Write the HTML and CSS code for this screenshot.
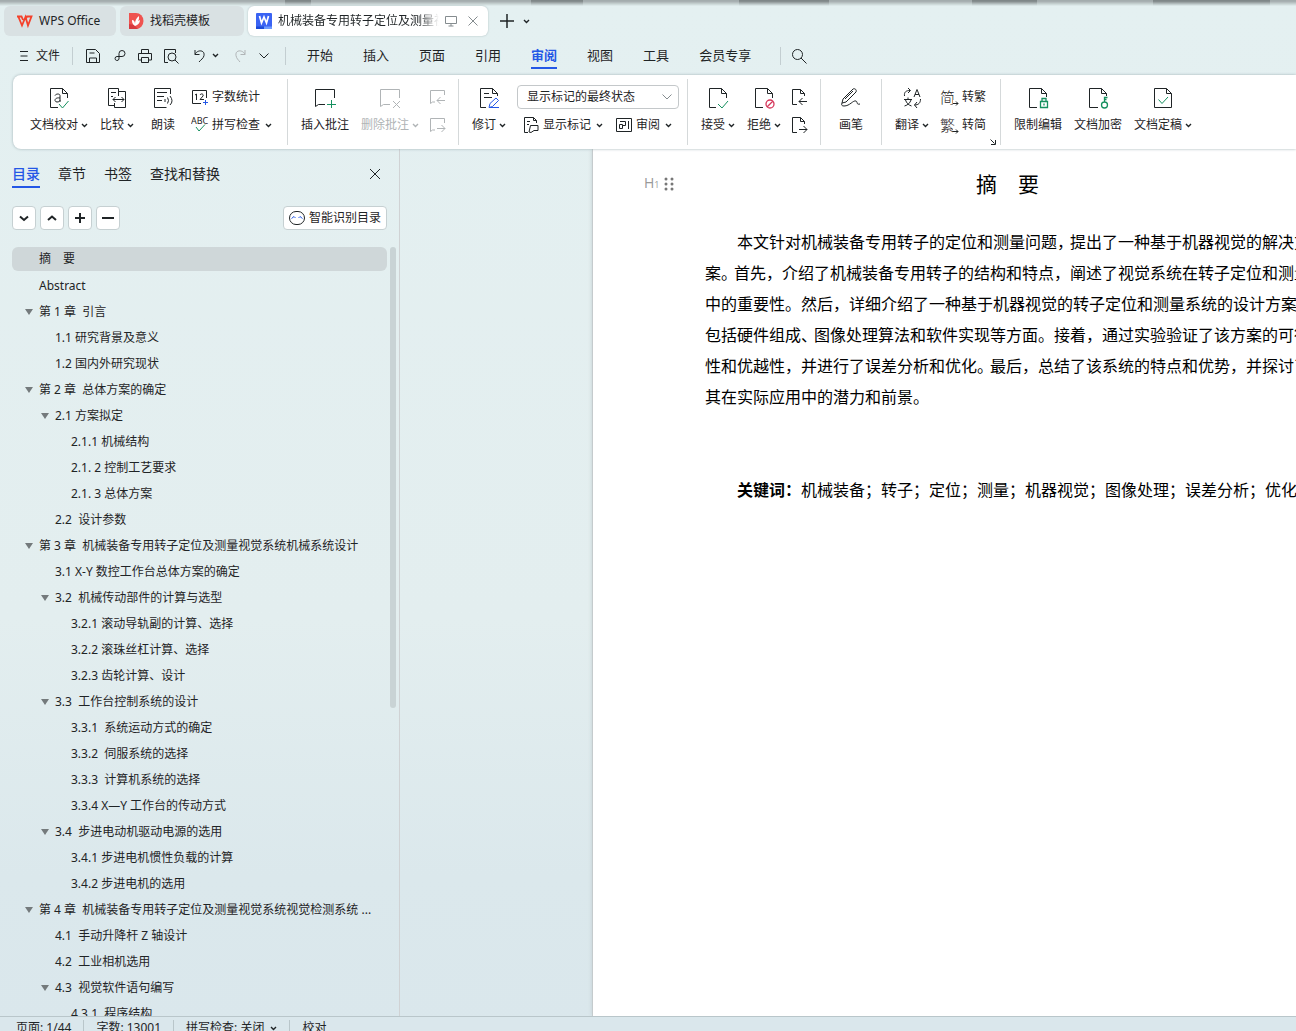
FILE: index.html
```html
<!DOCTYPE html>
<html lang="zh-CN">
<head>
<meta charset="utf-8">
<title>WPS Office</title>
<link rel="stylesheet" href="styles.css">
</head>
<body>
<svg class="defs" aria-hidden="true">
  <symbol id="caret" viewBox="0 0 7 5"><path d="M1 1l2.500 2.500L6 1" stroke-width="1.400"/></symbol>
</svg>
<header class="tabs">
  <button class="tab tab-home" type="button">
    <svg class="i16 logo" viewBox="0 0 16 16"><path d="M0 3.500h4.500L6 7M1.500 4L5 12.500 8.500 4 11 12.500 14.500 3.500H10L8.500 7" stroke-width="1.800"/></svg>
    <span>WPS Office</span>
  </button>
  <button class="tab tab-docer" type="button">
    <svg class="i16" viewBox="0 0 16 16"><path d="M1 0h7a7.500 8 0 0 1 0 16H1z" fill="#ef5350"/><path d="M1 11l5 1 4 4H1z" fill="#d63a3f"/><path d="M7 13c-3-2-3-4-3-6 2 0 3 2 3 4 0-3 1-6 4-8 0 2 0 4-1 5l2-1c0 3-2 5-5 6z" fill="#fff"/></svg>
    <span>找稻壳模板</span>
  </button>
  <button class="tab tab-active" type="button">
    <svg class="i16" viewBox="0 0 16 16"><rect width="16" height="16" rx="1" fill="#3a63f3"/><path d="M0 13.500h8V16H0z" fill="#1a4ad8"/><path d="M8 13.500h8V16H8z" fill="#6d9bff"/><path class="white" d="M3.500 3l2 7L8 4l2.500 6 2-7" stroke-width="1.700"/></svg>
    <span class="tab-title">机械装备专用转子定位及测量视</span>
    <svg class="i12 grey" viewBox="0 0 12 12"><path d="M.5 1.500h11v7H.5zM6 8.500v2.500M3.500 11h5"/></svg>
    <svg class="i12 grey tab-x" viewBox="0 0 12 12"><path d="M1.500 1.500l9 9M10.500 1.500l-9 9"/></svg>
  </button>
  <button class="plain new-tab" type="button" aria-label="新建"><svg class="i16" viewBox="0 0 16 16"><path d="M8 1v14M1 8h14" stroke-width="1.500"/></svg></button>
  <button class="plain" type="button" aria-label="更多"><svg class="caret"><use href="#caret"/></svg></button>
</header>
<nav class="menu">
  <button class="plain file" type="button"><svg class="i12" viewBox="0 0 12 12"><path d="M2 1.500h8M2.500 6h7M2 10.500h8"/></svg>文件</button>
  <span class="bar"></span>
  <div class="quick">
    <button class="plain" type="button" aria-label="保存"><svg class="i16" viewBox="0 0 16 16"><path d="M1.500 1.500h9l4 4v9h-13zM4.500 14v-4h7v4M4.500 5h5"/></svg></button>
    <button class="plain" type="button" aria-label="输出"><svg class="i16" viewBox="0 0 16 16"><path d="M7 8.500h4a3 3 0 1 0-3-3V11a2 2 0 1 1-2-2.500h1"/></svg></button>
    <button class="plain" type="button" aria-label="打印"><svg class="i16" viewBox="0 0 16 16"><path d="M4.500 5V1.500h7V5M4 12H1.500V5.500h13V12H12M4.500 9.500h7v5h-7z"/></svg></button>
    <button class="plain" type="button" aria-label="打印预览"><svg class="i16" viewBox="0 0 16 16"><path d="M5 14.500H1.500v-13h11V5"/><circle cx="9" cy="9" r="4"/><path d="M12 12l3.500 3.500"/></svg></button>
    <button class="plain undo" type="button" aria-label="撤销"><svg class="i16" viewBox="0 0 16 16"><path d="M3 2v4.500h4.500M3 6.500c2-5 10-5 9 1-.5 3-3 4-5 6.500"/></svg><svg class="caret"><use href="#caret"/></svg></button>
    <button class="plain" type="button" aria-label="恢复" disabled><svg class="i16" viewBox="0 0 16 16"><path d="M13 2v4.500H8.500M13 6.500c-2-5-10-5-9 1 .5 3 2 4 4 6.500"/></svg></button>
    <button class="plain" type="button" aria-label="自定义"><svg class="i12" viewBox="0 0 12 12"><path d="M1.500 3.500L6 8l4.500-4.500"/></svg></button>
  </div>
  <span class="bar"></span>
  <div class="menus">
    <a href="#">开始</a><a href="#">插入</a><a href="#">页面</a><a href="#">引用</a><a href="#" class="on">审阅</a><a href="#">视图</a><a href="#">工具</a><a href="#">会员专享</a>
  </div>
  <span class="bar"></span>
  <button class="plain search" type="button" aria-label="搜索"><svg class="i16" viewBox="0 0 16 16"><circle cx="6.500" cy="6.500" r="5"/><path d="M10 10l5.500 5.500"/></svg></button>
</nav>
<section class="ribbon">
  <div class="group g1">
    <button class="big w70" type="button"><svg class="i24" viewBox="0 0 24 24"><path d="M11 21.500H3.500v-19h12l5 5V12M15.500 2.500v5h5"/><path d="M8 9.500c1-2 5-2 5 0V16M13 12c-6-1-6 4-3 4 2 0 3-1 3-2"/><path class="green" d="M12 18l3.500 4 6-7"/></svg><span>文档校对<svg class="caret"><use href="#caret"/></svg></span></button>
    <button class="big w46" type="button"><svg class="i24" viewBox="0 0 24 24"><path d="M9 19.500H3.500v-17h10V10M6 6.500h5M6 10.500h2M14 5.500h6.500v16h-11V17M8 13.500h11M10.500 11L8 13.500l2.500 2.500M16.500 11l2.500 2.500-2.500 2.500"/></svg><span>比较<svg class="caret"><use href="#caret"/></svg></span></button>
    <button class="big w46" type="button"><svg class="i24" viewBox="0 0 24 24"><path d="M19.500 8V2.500h-16v19h12M6 6.500h10M6 10.500h7M6 14.500h5M14 13v3M16.500 11.500q2 3 0 6M19 10q4 5 0 9"/></svg><span>朗读</span></button>
    <div class="stack">
      <button class="row" type="button"><svg class="i18" viewBox="0 0 18 18"><path d="M10 15.500H1.500v-13h14V10"/><path d="M4 7l1.500-1v6M9 7c1-2 4-1 3 1l-3 3.500h4"/><path class="blue" d="M14.500 12v5M12 14.500h5"/></svg>字数统计</button>
      <button class="row" type="button"><svg class="i18" viewBox="0 0 18 18"><text x="0" y="8" class="abc">ABC</text><path class="green" d="M5 11l3 4 6-6.500"/></svg>拼写检查<svg class="caret"><use href="#caret"/></svg></button>
    </div>
  </div>
  <div class="group g2">
    <button class="big w60" type="button"><svg class="i24" viewBox="0 0 24 24"><path d="M21.500 12V3.500h-19v17l3-2H12"/><path class="green" d="M18.500 14v8M14 18.500h9"/></svg><span>插入批注</span></button>
    <button class="big w70" type="button" disabled><svg class="i24" viewBox="0 0 24 24"><path d="M21.500 12V3.500h-19v17l3-2H12M15 15l7 7M22 15l-7 7"/></svg><span>删除批注<svg class="caret"><use href="#caret"/></svg></span></button>
    <div class="stack narrow">
      <button class="row" type="button" aria-label="上一条" disabled><svg class="i18" viewBox="0 0 18 18"><path d="M16.500 7V2.500h-14v13l2-1.500H7M9 12.500h8M12.500 9L9 12.500l3.500 3.500"/></svg></button>
      <button class="row" type="button" aria-label="下一条" disabled><svg class="i18" viewBox="0 0 18 18"><path d="M16.500 7V2.500h-14v13l2-1.500H7M9 12.500h8M13.500 9l3.500 3.500-3.500 3.500"/></svg></button>
    </div>
  </div>
  <div class="group g3">
    <button class="big w46" type="button"><svg class="i24" viewBox="0 0 24 24"><path d="M9 21.500H3.500v-19h12l5 5V10M15.500 2.500v5h5M7 7.500h5M7 11.500h8"/><path class="blue" d="M12 21.500l1-4 6-5.500 2.500 2.500-6 6-3.500 1h10"/></svg><span>修订<svg class="caret"><use href="#caret"/></svg></span></button>
    <div class="stack">
      <div class="state">
        <select aria-label="显示标记"><option>显示标记的最终状态</option></select>
        <svg class="i12 grey" viewBox="0 0 12 12"><path d="M1.500 3.500L6 8l4.500-4.500"/></svg>
      </div>
      <div class="pair">
        <button class="row" type="button"><svg class="i18" viewBox="0 0 18 18"><path d="M6 16.500H2.500v-15h9L14.500 4.500V7M11.500 1.500v3h3M5 5.500h3M5 8.500h2M8.500 9.500H16v5h-4l-3 2-2-.5z"/></svg>显示标记<svg class="caret"><use href="#caret"/></svg></button>
        <button class="row" type="button"><svg class="i18" viewBox="0 0 18 18"><path d="M1.500 2.500h15v13h-15zM13.500 5v8M5 5.500h5.500v4H8M4.500 8.500h3v4h-3z"/></svg>审阅<svg class="caret"><use href="#caret"/></svg></button>
      </div>
    </div>
  </div>
  <div class="group g4">
    <button class="big w46" type="button"><svg class="i24" viewBox="0 0 24 24"><path d="M10 21.500H3.500v-19h12l5 5V12M15.500 2.500v5h5"/><path class="green" d="M12 18l4 4 6-7"/></svg><span>接受<svg class="caret"><use href="#caret"/></svg></span></button>
    <button class="big w46" type="button"><svg class="i24" viewBox="0 0 24 24"><path d="M11 21.500H3.500v-19h12l5 5V12M15.500 2.500v5h5"/><path class="red" d="M15 21l6-6M22 18a4 4 0 1 1-8 0 4 4 0 0 1 8 0z" stroke-width="1.300"/></svg><span>拒绝<svg class="caret"><use href="#caret"/></svg></span></button>
    <div class="stack narrow">
      <button class="row" type="button" aria-label="上一处修订"><svg class="i18" viewBox="0 0 18 18"><path d="M7 16.500H2.500v-15h8l4 4V8M10.500 1.500v4h4M9 13.500h8M12.500 10L9 13.500l3.500 3.500"/></svg></button>
      <button class="row" type="button" aria-label="下一处修订"><svg class="i18" viewBox="0 0 18 18"><path d="M7 16.500H2.500v-15h8l4 4V8M10.500 1.500v4h4M9 13.500h8M13.500 10l3.500 3.500-3.500 3.500"/></svg></button>
    </div>
  </div>
  <div class="group g5">
    <button class="big w60" type="button"><svg class="i24" viewBox="0 0 24 24"><path d="M3 17l1-4L14 3c2-1 4 1 3 3L7 16zM6 13l8-8M3 17c-1 2 0 3 2 3 6 0 9-6 12-5 2 1 0 4 4 3"/></svg><span>画笔</span></button>
  </div>
  <div class="group g6">
    <button class="big w46" type="button"><svg class="i24" viewBox="0 0 24 24"><path d="M4.500 10C4 6 6 4.500 10 4.500M8 2l2.500 2.500L8 7M14 11l3-7.500 3 7.500M15 8.500h4M4 13.500h8M8 11.500v2M5.500 14c1 3 3 5 6 6M11 14c-1 3-3 5-6.500 6M20.500 13c0 4-2 6-6 6M17 16l-2.500 3 2.500 3"/></svg><span>翻译<svg class="caret"><use href="#caret"/></svg></span></button>
    <div class="stack">
      <button class="row" type="button"><span class="glyph">简<svg viewBox="0 0 6 6"><path d="M0 3.500h5M3 1.500l2 2-2 2"/></svg></span>转繁</button>
      <button class="row" type="button"><span class="glyph">繁<svg viewBox="0 0 6 6"><path d="M0 3.500h5M3 1.500l2 2-2 2"/></svg></span>转简</button>
    </div>
    <svg class="launcher" viewBox="0 0 6 6"><path d="M.5 .5l4 4M5.500 1v4.500H1"/></svg>
  </div>
  <div class="group g7">
    <button class="big w60" type="button"><svg class="i24" viewBox="0 0 24 24"><path d="M11 21.500H3.500v-19h12l5 5V11M15.500 2.500v5h5"/><path class="green" d="M14.500 15.500h7v6h-7zM16 15v-2.500h4V15M18 17.500v2" stroke-width="1.300"/></svg><span>限制编辑</span></button>
    <button class="big w60" type="button"><svg class="i24" viewBox="0 0 24 24"><path d="M12 21.500H3.500v-19h12l5 5V10M15.500 2.500v5h5"/><path class="green" d="M18.500 16v-4.500h3M18.500 13.500h2M21.500 19a3 3 0 1 1-6 0 3 3 0 0 1 6 0z" stroke-width="1.300"/></svg><span>文档加密</span></button>
    <button class="big w70" type="button"><svg class="i24" viewBox="0 0 24 24"><path d="M15.500 2.500h-12v19h17v-14zM15.500 2.500v5h5"/><path class="green" d="M7.500 13.500l3.500 4 6-6.500"/></svg><span>文档定稿<svg class="caret"><use href="#caret"/></svg></span></button>
  </div>
</section>
<main class="work">
  <aside class="side">
    <div class="side-tabs">
      <button class="on" type="button">目录</button><button type="button">章节</button><button type="button">书签</button><button type="button">查找和替换</button>
      <button class="close" type="button" aria-label="关闭"><svg class="i12" viewBox="0 0 12 12"><path d="M1 1l10 10M11 1L1 11"/></svg></button>
    </div>
    <div class="tools">
      <button type="button" aria-label="展开"><svg class="i12" viewBox="0 0 12 12"><path d="M2 4.500l4 3.500 4-3.500" stroke-width="2"/></svg></button>
      <button type="button" aria-label="收起"><svg class="i12" viewBox="0 0 12 12"><path d="M2 8l4-3.500L10 8" stroke-width="2"/></svg></button>
      <button type="button" aria-label="增加"><svg class="i12" viewBox="0 0 12 12"><path d="M1 6h10M6 1v10" stroke-width="2"/></svg></button>
      <button type="button" aria-label="减少"><svg class="i12" viewBox="0 0 12 12"><path d="M0 6h12" stroke-width="2"/></svg></button>
      <button class="smart" type="button"><svg class="i16" viewBox="0 0 16 16"><rect x=".5" y="1.500" width="15" height="13" rx="6.500"/><path class="blue" d="M2.500 8.500l2.500-2 1.500 1.500M9.500 8L11 6.500l2.500 2"/></svg>智能识别目录</button>
    </div>
    <div class="toc-wrap">
      <ul class="toc">
        <li class="sel">摘　要</li>
        <li>Abstract</li>
        <li class="open">第 1 章&nbsp; 引言</li>
        <li class="l2">1.1 研究背景及意义</li>
        <li class="l2">1.2 国内外研究现状</li>
        <li class="open">第 2 章&nbsp; 总体方案的确定</li>
        <li class="l2 open">2.1 方案拟定</li>
        <li class="l3">2.1.1 机械结构</li>
        <li class="l3">2.1. 2 控制工艺要求</li>
        <li class="l3">2.1. 3 总体方案</li>
        <li class="l2">2.2&nbsp; 设计参数</li>
        <li class="open">第 3 章&nbsp; 机械装备专用转子定位及测量视觉系统机械系统设计</li>
        <li class="l2">3.1 X-Y 数控工作台总体方案的确定</li>
        <li class="l2 open">3.2&nbsp; 机械传动部件的计算与选型</li>
        <li class="l3">3.2.1 滚动导轨副的计算、选择</li>
        <li class="l3">3.2.2 滚珠丝杠计算、选择</li>
        <li class="l3">3.2.3 齿轮计算、设计</li>
        <li class="l2 open">3.3&nbsp; 工作台控制系统的设计</li>
        <li class="l3">3.3.1&nbsp; 系统运动方式的确定</li>
        <li class="l3">3.3.2&nbsp; 伺服系统的选择</li>
        <li class="l3">3.3.3&nbsp; 计算机系统的选择</li>
        <li class="l3">3.3.4 X—Y 工作台的传动方式</li>
        <li class="l2 open">3.4&nbsp; 步进电动机驱动电源的选用</li>
        <li class="l3">3.4.1 步进电机惯性负载的计算</li>
        <li class="l3">3.4.2 步进电机的选用</li>
        <li class="open">第 4 章&nbsp; 机械装备专用转子定位及测量视觉系统视觉检测系统 ...</li>
        <li class="l2">4.1&nbsp; 手动升降杆 Z 轴设计</li>
        <li class="l2">4.2&nbsp; 工业相机选用</li>
        <li class="l2 open">4.3&nbsp; 视觉软件语句编写</li>
        <li class="l3">4.3.1&nbsp; 程序结构</li>
      </ul>
      <div class="scroll"><div class="thumb"></div></div>
    </div>
  </aside>
  <div class="canvas">
    <article class="paper">
      <div class="heading">
        <span class="h-mark">H<small>1</small></span>
        <svg class="grip" viewBox="0 0 10 14"><circle cx="2" cy="2" r="1.500"/><circle cx="8" cy="2" r="1.500"/><circle cx="2" cy="7" r="1.500"/><circle cx="8" cy="7" r="1.500"/><circle cx="2" cy="12" r="1.500"/><circle cx="8" cy="12" r="1.500"/></svg>
        <h1>摘　要</h1>
      </div>
      <p>本文针对机械装备专用转子的定位和测量问题<span class="tight">，</span>提出了一种基于机器视觉的解决方<br>案<span class="tight">。</span>首先，介绍了机械装备专用转子的结构和特点，阐述了视觉系统在转子定位和测量<br>中的重要性。然后，详细介绍了一种基于机器视觉的转子定位和测量系统的设计方案，<br>包括硬件组成<span class="tight">、</span>图像处理算法和软件实现等方面。接着，通过实验验证了该方案的可行<br>性和优越性，并进行了误差分析和优化<span class="tight">。</span>最后，总结了该系统的特点和优势，并探讨了<br>其在实际应用中的潜力和前景。</p>
      <p class="keys"><b>关键词：</b>机械装备；转子；定位；测量；机器视觉；图像处理；误差分析；优化</p>
    </article>
  </div>
</main>
<footer class="status">
  <span>页面: 1/44</span><span>字数: 13001</span><span>拼写检查: 关闭<svg class="caret"><use href="#caret"/></svg></span><span>校对</span>
</footer>
</body>
</html>
```
FILE: styles.css
```css
* { box-sizing: border-box; }
body {
  margin: 0;
  height: 100vh;
  overflow: hidden;
  display: flex;
  flex-direction: column;
  font: 12px/16px "Noto Sans", "Noto Sans CJK SC", sans-serif;
  color: #1f2426;
  background: linear-gradient(#e4f0f1, #e3eeef 60%, #dbe8ec 85%, #dae7ec);
}
button, select { font: inherit; color: inherit; }
button { border: 0; background: none; padding: 0; display: flex; align-items: center; white-space: nowrap; }
button:disabled { color: #b0b4b6; }
svg { fill: none; stroke: currentColor; flex: none; }
ul { list-style: none; margin: 0; padding: 0; }
.defs { display: none; }
.i12 { width: 12px; height: 12px; }
.i16 { width: 16px; height: 16px; }
.i18 { width: 18px; height: 18px; }
.i24 { width: 24px; height: 24px; }
.caret { width: 7px; height: 5px; }
.grey { color: #858c8f; }
.green { stroke: #16905f; }
.blue { stroke: #2457e6; }
.red { stroke: #d5365a; }
.white { stroke: #fff; }
.logo { color: #f4412b; }

.tabs {
  flex: none;
  position: relative;
  height: 37px;
  padding: 6px 4px 1px;
  display: flex;
  gap: 4px;
}
.tabs::before {
  content: "";
  position: absolute;
  inset: 0 0 auto;
  height: 6px;
  background: linear-gradient(90deg, #a3acad 22%, #7f8788 22%, #7f8788 24%, #a3acad 24%, #a3acad 41%, #7f8788 41%, #7f8788 45%, #a3acad 45%, #a3acad 57%, #7f8788 57%, #7f8788 64%, #a3acad 64%, #a3acad 75%, #7f8788 75%, #7f8788 80%, #a3acad 80%, #a3acad 89%, #7f8788 89%, #7f8788 98%, #a3acad 98%);
  mask-image: linear-gradient(#000 20%, transparent);
}
.tab { height: 30px; border-radius: 6px; background: #d9e1e3; padding: 0 8px; gap: 6px; }
.tab-docer > svg, .tab-active > svg:first-child { stroke: none; }
.tab-home { width: 112px; padding-left: 13px; }
.tab-docer { width: 124px; }
.tab-active { width: 240px; background: #fff; box-shadow: 0 0 2px #a9b9bc; }
.tab-title { width: 161px; overflow: hidden; mask-image: linear-gradient(90deg, #000 88%, transparent); }
.tab-x { margin-left: 4px; }
.new-tab { margin: 0 4px 0 7px; }

.menu { flex: none; height: 37px; display: flex; align-items: center; padding-left: 18px; }
.file { gap: 6px; }
.bar { width: 1px; height: 18px; background: #c3ced1; margin: 0 12px; }
.quick { display: flex; gap: 10px; width: 188px; }
.undo { gap: 4px; margin: 0 3px; }
.menus { display: flex; gap: 30px; margin: 0 17px 0 9px; font-size: 13px; }
.menus a { color: inherit; text-decoration: none; line-height: 24px; border-bottom: 2px solid transparent; }
.menus .on { color: #2457e6; font-weight: bold; border-color: #2457e6; }
.search { margin-left: -2px; }

.ribbon {
  flex: none;
  position: relative;
  z-index: 2;
  margin: 1px 0 0 13px;
  height: 74px;
  display: flex;
  background: #fff;
  border-radius: 8px 0 0 8px;
  box-shadow: 0 0 3px #9fb0b4;
}
.group { display: flex; align-items: flex-start; padding: 10px 0 0; margin: 4px 0; border-right: 1px solid #d5d9da; height: 66px; position: relative; }
.group .big { margin-top: -3px; }
.g1 { width: 275px; padding-left: 11px; }
.g2 { width: 171px; padding-left: 7px; }
.g3 { width: 229px; padding-left: 7px; }
.g4 { width: 133px; padding-left: 7px; }
.g5 { width: 61px; }
.g6 { width: 119px; padding-left: 7px; }
.g7 { border: 0; padding-left: 7px; }
.big { flex-direction: column; gap: 7px; }
.big span { display: flex; align-items: center; gap: 3px; }
.w70 { width: 70px; }
.w60 { width: 60px; }
.w46 { width: 46px; }
.stack { display: flex; flex-direction: column; gap: 10px; margin: -1px 0 0 5px; }
.narrow { margin-left: 3px; }
.row { height: 18px; gap: 3px; }
.row .caret { margin-left: 2px; }
.abc { font-size: 9px; fill: currentColor; stroke: none; }
.glyph { font-size: 15px; font-weight: 300; width: 19px; position: relative; text-align: left; }
.glyph svg { position: absolute; right: 0; bottom: -1px; width: 6px; height: 6px; background: #fff; }
.state { position: relative; height: 24px; margin: -3px 0; }
.state select {
  appearance: none;
  width: 162px;
  height: 24px;
  padding: 0 9px;
  border: 1px solid #c4c8ca;
  border-radius: 4px;
  background: #fff;
}
.state svg { position: absolute; right: 6px; top: 6px; pointer-events: none; }
.pair { display: flex; gap: 12px; padding-left: 5px; }
.launcher { position: absolute; right: 4px; bottom: 0; width: 6px; height: 6px; }

.work { flex: 1; min-height: 0; display: flex; }
.side { width: 400px; flex: none; border-right: 1px solid #d0d2d4; display: flex; flex-direction: column; padding: 13px 3px 0 12px; }
.side-tabs { display: flex; gap: 18px; font-size: 14px; }
.side-tabs button { height: 26px; border-bottom: 2px solid transparent; }
.side-tabs .on { color: #2457e6; font-weight: 500; border-color: #2457e6; }
.side-tabs .close { margin-left: auto; margin-right: 15px; }
.tools { display: flex; gap: 4px; margin: 18px 9px 17px 0; }
.tools button { width: 24px; height: 24px; justify-content: center; border: 1px solid #c6d0d2; border-radius: 4px; background: #fff; }
.tools .smart { width: 104px; margin-left: auto; gap: 4px; }
.toc-wrap { flex: 1; min-height: 0; display: flex; justify-content: space-between; overflow: hidden; }
.toc { width: 375px; }
.toc li { height: 26px; line-height: 26px; padding-left: 27px; white-space: pre; border-radius: 6px; display: flex; align-items: center; }
.toc .l2 { padding-left: 43px; }
.toc .l3 { padding-left: 59px; }
.toc .sel { background: #cfd7d9; height: 24px; margin-bottom: 2px; }
.open::before { content: ""; border: 4px solid transparent; border-top: 6px solid #747a7c; border-bottom: 0; margin: 0 6px 0 -14px; }
.scroll { width: 6px; }
.thumb { height: 60%; background: #c9d3d5; border-radius: 3px; }

.canvas { flex: 1; min-width: 0; display: flex; padding-left: 192px; }
.paper { flex: 1; min-width: 0; overflow: hidden; white-space: nowrap; background: #fff; border-left: 1px solid #c5cbcd; box-shadow: 0 0 4px #c3ced1; padding: 19px 0 0 51px; color: #000; font-family: "Noto Sans CJK SC", sans-serif; font-size: 16px; line-height: 31px; }
.heading { display: flex; align-items: center; }
.h-mark { color: #999; font: 14px/16px "Open Sans", sans-serif; width: 20px; }
.h-mark small { font-size: 9px; }
.grip { width: 10px; height: 14px; fill: #777; stroke: none; }
h1 { font-size: 21px; font-weight: normal; line-height: 31px; margin: 0 0 0 302px; }
.paper p { margin: 27px 0 0 61px; text-indent: 32px; }
.tight { margin-right: -3px; }
.paper .keys { margin-top: 62px; }

.status { flex: none; height: 15px; overflow: hidden; border-top: 1px solid #b9c6ca; padding: 3px 4px 0; display: flex; background: #dae7ec; }
.status span { flex: none; display: flex; align-items: center; gap: 6px; padding: 0 12px; height: 16px; border-right: 1px solid #b9c6ca; }
.status span:last-child { border: 0; }
```
